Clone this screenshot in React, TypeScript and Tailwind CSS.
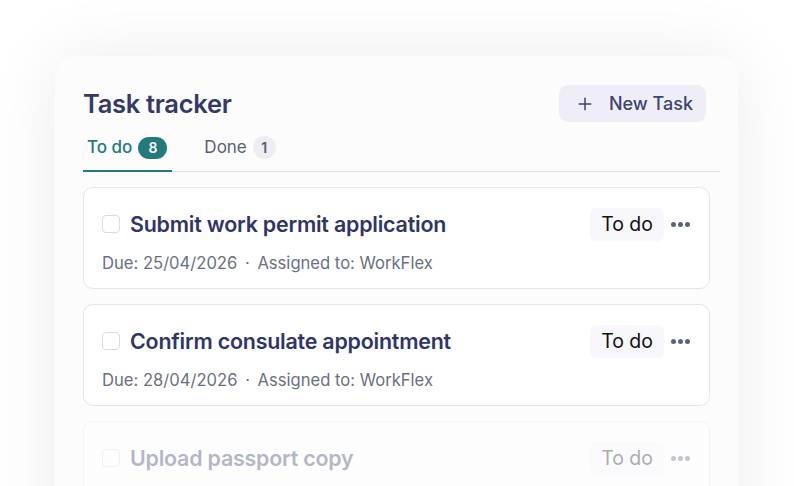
import { Plus } from 'lucide-react';

type Task = {
  title: string;
  due: string;
  assignee: string;
  faded?: boolean;
};

const tasks: Task[] = [
  { title: 'Submit work permit application', due: '25/04/2026', assignee: 'WorkFlex' },
  { title: 'Confirm consulate appointment', due: '28/04/2026', assignee: 'WorkFlex' },
  { title: 'Upload passport copy', due: '02/05/2026', assignee: 'WorkFlex', faded: true },
];

function TaskCard({ task }: { task: Task }) {
  return (
    <div
      className={`h-[102px] rounded-[10px] border border-[#e3e5ec] bg-white pl-[18px] pr-[19px] pt-[20px] ${
        task.faded ? 'opacity-35' : ''
      }`}
    >
      <div className="flex h-[33px] items-center">
        <div className="h-[18px] w-[18px] shrink-0 rounded-[4px] border border-[#d9dbe3] bg-white" />
        <div className="ml-[10px] flex-1 text-[21.4px] leading-[28px] font-semibold tracking-[-0.2px] text-[#2f3566]">
          {task.title}
        </div>
        <div className="rounded-[6px] bg-[#f8f7fb] px-[11px] py-[4px] text-[19.5px] leading-[25px] text-[#111]">
          To do
        </div>
        <div className="ml-[7px] flex w-[19px] items-center justify-between">
          <span className="h-[5px] w-[5px] rounded-full bg-[#5b6475]" />
          <span className="h-[5px] w-[5px] rounded-full bg-[#5b6475]" />
          <span className="h-[5px] w-[5px] rounded-full bg-[#5b6475]" />
        </div>
      </div>
      <div className="mt-[10px] text-[16.6px] leading-[24px] text-[#6b7080]">
        Due: {task.due} <span className="mx-[3px]">·</span> Assigned to: {task.assignee}
      </div>
    </div>
  );
}

export default function App() {
  return (
    <div
      className="h-[486px] overflow-hidden bg-white pt-[56px] pl-[55px] pr-[56px]"
      style={{ fontFamily: 'Inter, "Noto Sans", sans-serif' }}
    >
      <div className="h-[520px] rounded-[20px] bg-[#fcfcfd] px-[28px] pt-[29px] shadow-[0_0_70px_rgba(30,30,60,0.08)]">
        {/* header */}
        <div className="flex items-start justify-between">
          <h1 className="mt-[3px] text-[25.5px] leading-[32px] font-semibold tracking-[-0.3px] text-[#333a66]">
            Task tracker
          </h1>
          <button className="mr-[4px] flex h-[37px] items-center gap-[14px] rounded-[9px] bg-[#efeef8] pl-[16px] pr-[13px] text-[18px] font-medium text-[#3c4470]">
            <Plus size={20} strokeWidth={1.8} />
            New Task
          </button>
        </div>

        {/* tabs */}
        <div className="mt-[13px] mr-[-10px] flex items-end border-b border-[#dfe0e6]">
          <div className="-mb-px flex items-center gap-[6px] border-b-2 border-[#237a7a] pl-[4px] pr-[5px] pb-[9px]">
            <span className="text-[17px] font-medium text-[#237a7a]">To do</span>
            <span className="flex h-[22px] min-w-[29px] items-center justify-center rounded-full bg-[#237a7a] text-[14px] font-semibold text-white">
              8
            </span>
          </div>
          <div className="ml-[32px] flex items-center gap-[6px] pb-[10px]">
            <span className="text-[17px] text-[#5a6070]">Done</span>
            <span className="flex h-[23px] w-[23px] items-center justify-center rounded-full bg-[#eeeef2] text-[14px] font-semibold text-[#5a6070]">
              1
            </span>
          </div>
        </div>

        {/* task list */}
        <div className="mt-[15px] flex flex-col gap-[15px]">
          {tasks.map((t) => (
            <TaskCard key={t.title} task={t} />
          ))}
        </div>
      </div>
    </div>
  );
}
